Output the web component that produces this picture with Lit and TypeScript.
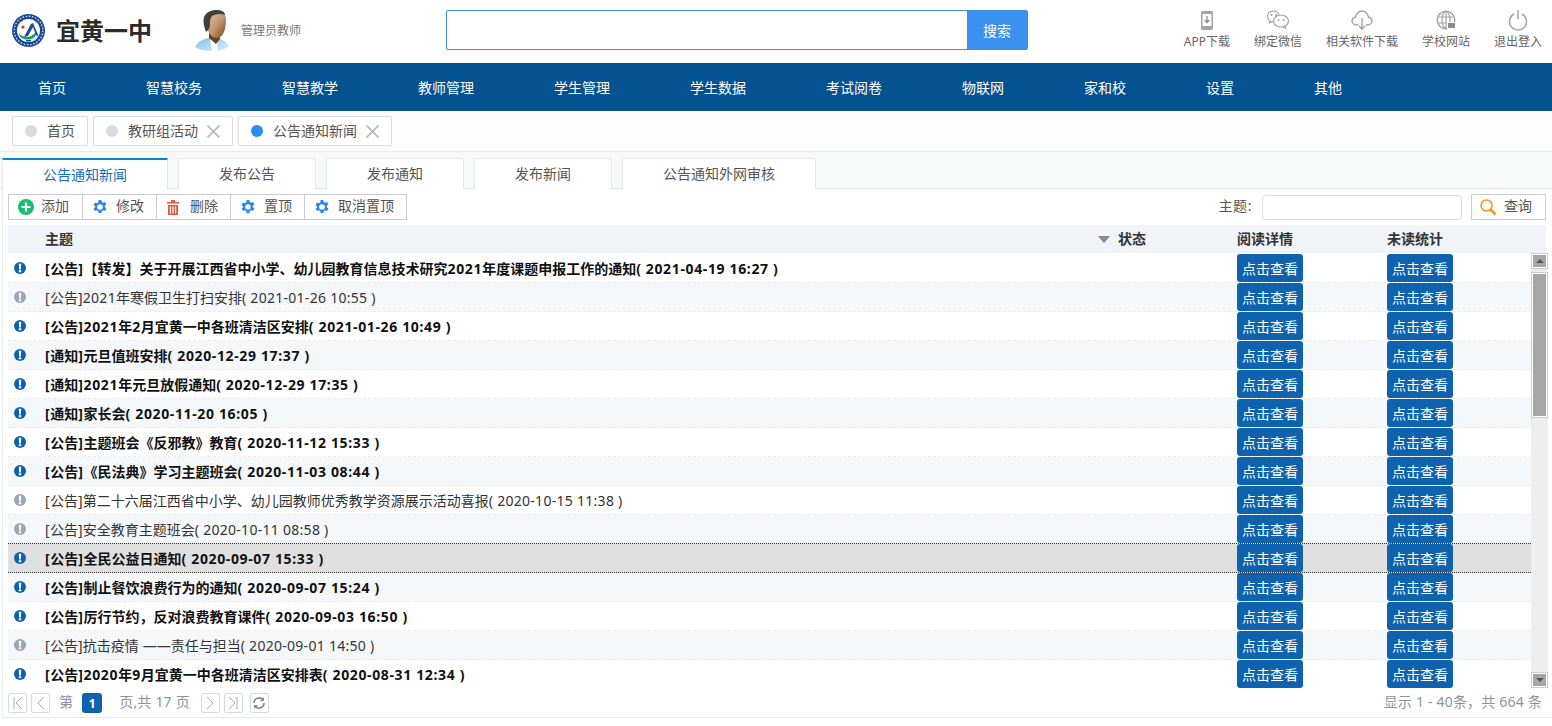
import { LitElement, html, css } from "lit";
import { customElement } from "lit/decorators.js";

const rows: [string, boolean][] = [
  ["[公告]【转发】关于开展江西省中小学、幼儿园教育信息技术研究2021年度课题申报工作的通知( 2021-04-19 16:27 )", true],
  ["[公告]2021年寒假卫生打扫安排( 2021-01-26 10:55 )", false],
  ["[公告]2021年2月宜黄一中各班清洁区安排( 2021-01-26 10:49 )", true],
  ["[通知]元旦值班安排( 2020-12-29 17:37 )", true],
  ["[通知]2021年元旦放假通知( 2020-12-29 17:35 )", true],
  ["[通知]家长会( 2020-11-20 16:05 )", true],
  ["[公告]主题班会《反邪教》教育( 2020-11-12 15:33 )", true],
  ["[公告]《民法典》学习主题班会( 2020-11-03 08:44 )", true],
  ["[公告]第二十六届江西省中小学、幼儿园教师优秀教学资源展示活动喜报( 2020-10-15 11:38 )", false],
  ["[公告]安全教育主题班会( 2020-10-11 08:58 )", false],
  ["[公告]全民公益日通知( 2020-09-07 15:33 )", true],
  ["[公告]制止餐饮浪费行为的通知( 2020-09-07 15:24 )", true],
  ["[公告]厉行节约，反对浪费教育课件( 2020-09-03 16:50 )", true],
  ["[公告]抗击疫情 ——责任与担当( 2020-09-01 14:50 )", false],
  ["[公告]2020年9月宜黄一中各班清洁区安排表( 2020-08-31 12:34 )", true],
];
const nav = ["首页", "智慧校务", "智慧教学", "教师管理", "学生管理", "学生数据", "考试阅卷", "物联网", "家和校", "设置", "其他"];

const gear = html`<svg width="16" height="16" viewBox="0 0 16 16"><path fill="#2b85e4" fill-rule="evenodd" d="M6.6 1h2.8l.4 2 1.2.7 2-.7 1.4 2.4-1.6 1.4v1.4l1.6 1.4L13 12l-2-.7-1.2.7-.4 2H6.6l-.4-2-1.2-.7-2 .7-1.4-2.4 1.6-1.4V7.4L1.6 6 3 3.6l2 .7 1.2-.7zM8 5.2a2.8 2.8 0 100 5.6 2.8 2.8 0 000-5.6z"/></svg>`;
const plus = html`<svg width="16" height="16" viewBox="0 0 16 16"><circle cx="8" cy="8" r="8" fill="#19be6b"/><path d="M8 3.5v9M3.5 8h9" stroke="#fff" stroke-width="2.2"/></svg>`;
const trash = html`<svg width="12" height="15" viewBox="0 0 12 15"><path fill="#e8563f" d="M4 0h4v2h4v1.5H0V2h4zM1 5h10v10H1zm1.8 1.5v7H4v-7zm2.6 0v7h1.2v-7zm2.6 0v7h1.2v-7z"/></svg>`;
const search = html`<svg width="18" height="18" viewBox="0 0 18 18"><circle cx="7.5" cy="7.5" r="5.5" fill="none" stroke="#f7931e" stroke-width="1.5"/><path d="M11.5 11.5l5 5" stroke="#f7931e" stroke-width="2.5"/></svg>`;
const alert = (on: boolean) => html`<svg width="12" height="12" viewBox="0 0 12 12"><circle cx="6" cy="6" r="6" fill="${on ? "#0d62ae" : "#9aa7b4"}"/><path d="M4.8 1.8h2.4l-.3 5.6H5.1zM4.8 8.2h2.4v2H4.8z" fill="#fff"/></svg>`;
const close = html`<svg class="x" viewBox="0 0 13 13"><path d="M.5.5l12 12M12.5.5l-12 12" stroke="#bbb" stroke-width="1.8"/></svg>`;
const title = (t: string) => t.split(/([\x00-\x7f]+)/).map((p, i) => (i % 2 ? html`<span class="lat">${p}</span>` : p));

@customElement("app-root")
export class AppRoot extends LitElement {
  static styles = css`
    :host { display: block; width: 1552px; height: 726px; overflow: hidden; background: #fff; font-family: "Noto Sans", "Noto Sans CJK SC", sans-serif; color: #444; font-size: 14px; }
    svg { display: block; flex: none; }
    .t1 { padding-bottom: 2px; }
    .t2 { padding-bottom: 4px; }
    .top { height: 63px; display: flex; align-items: center; }
    .logo { margin: -2px 0 0 12px; width: 33px; height: 33px; }
    .brand { margin-left: 11px; font-size: 24px; font-weight: 700; color: #2b2b2b; width: 100px; white-space: nowrap; padding-bottom: 4px; }
    .avatar { margin: -3px 0 0 39px; width: 34px; height: 41px; }
    .role { margin-left: 12px; font-size: 12px; color: #777; width: 62px; white-space: nowrap; padding-bottom: 4px; }
    .sbox { margin: -3px 0 0 143px; width: 580px; border: 1px solid #3c8fe8; border-radius: 2px; display: flex; height: 38px; }
    .sfield { flex: 1; }
    .sbtn { width: 60px; background: #3b91ee; color: #fff; display: flex; align-items: center; justify-content: center; font-size: 14px; }
    .tools { margin: -4px 10px 0 auto; display: flex; gap: 24px; }
    .tool { display: flex; flex-direction: column; align-items: center; font-size: 12px; color: #666; gap: 3px; line-height: 16px; }
    .tool svg { height: 22px; }
    .nav { height: 48px; background: #04528f; display: flex; align-items: center; padding-left: 38px; gap: 80px; color: #fff; font-size: 14px; white-space: nowrap; }
    .tabs { height: 40px; display: flex; align-items: center; gap: 5px; padding: 0 0 0 12px; border-bottom: 1px solid #e8eaee; background: #fdfdfd; }
    .tab { height: 28px; border: 1px solid #d7dde4; border-radius: 2px; background: #fff; display: flex; align-items: center; padding: 0 12px; font-size: 14px; color: #555; }
    .dot { width: 12px; height: 12px; border-radius: 50%; background: #d3dce4; margin-right: 10px; }
    .dot.on { background: #2d8cf0; }
    .x { margin-left: 9px; width: 13px; height: 13px; }
    .subs { height: 37px; padding: 6px 0 0 2px; box-sizing: border-box; display: flex; gap: 10px; background: #f7f8f8; border-bottom: 1px solid #dfe3e8; }
    .sub { border: 1px solid #e3e6ea; border-bottom: none; background: #fff; display: flex; align-items: center; justify-content: center; font-size: 14px; color: #555; box-sizing: border-box; height: 31px; }
    .sub.on { width: 166px; border-top: 2px solid #0a84d0; color: #1a6db8; margin-bottom: -1px; height: 32px; }
    .w138 { width: 138px; }
    .w194 { width: 194px; }
    .main { border-left: 1px solid #e6e9ee; margin-left: 2px; border-bottom: 1px solid #e6e9ee; height: 529px; box-sizing: border-box; padding-left: 5px; }
    .bar { height: 36px; display: flex; align-items: center; padding-right: 6px; }
    .btns { display: flex; border: 1px solid #c8cbd2; height: 26px; box-sizing: border-box; }
    .b { display: flex; align-items: center; border-right: 1px solid #c8cbd2; padding-left: 9px; gap: 8px; font-size: 14px; color: #555; box-sizing: border-box; width: 74px; white-space: nowrap; }
    .b.trash { padding-left: 10px; gap: 11px; }
    .b.add { gap: 7px; }
    .b:last-child { border-right: none; width: 101px; }
    .q { margin-left: auto; font-size: 14px; color: #555; letter-spacing: .6px; }
    .inp { width: 198px; height: 23px; border: 1px solid #ddd; border-radius: 4px; margin-left: 10px; }
    .qb { margin-left: 9px; height: 24px; border: 1px solid #ccc; display: flex; align-items: center; gap: 7px; padding-left: 7px; font-size: 14px; color: #555; width: 66px; }
    .head { height: 28px; background: #f0f3f7; display: grid; grid-template-columns: 37px 1025px 48px 119px 150px 1fr; align-items: center; font-size: 14px; font-weight: 700; color: #333; margin-right: 6px; }
    .tri { width: 0; height: 0; border: 6px solid transparent; border-top: 7px solid #7f8a96; border-bottom: none; justify-self: end; margin-right: 8px; }
    .body { position: relative; height: 435px; margin-right: 4px; overflow: hidden; padding-top: 1px; box-sizing: border-box; }
    .row { height: 29px; display: grid; grid-template-columns: 37px 1192px 150px 150px; align-items: center; box-sizing: border-box; border-bottom: 1px dashed #e8ecf0; color: #333; font-size: 14px; white-space: nowrap; margin-right: 17px; }
    .row.alt { background: #f5f8fb; }
    .row.b0 { font-weight: 700; color: #111; }
    .row.sel { background: #e0e0e0; border-top: 1px dotted #333; border-bottom: 1px dotted #333; margin-top: -1px; height: 30px; }
    .row svg { margin-left: 6px; }
    .lat { letter-spacing: .28px; }
    .b0 .lat { letter-spacing: .64px; }
    .see { width: 66px; height: 28px; background: #0f62ae; color: #fff; border-radius: 3px; display: flex; align-items: center; justify-content: center; font-size: 14px; font-weight: 400; }
    .scroll { position: absolute; right: 0; top: 0; width: 17px; height: 435px; background: #eee; }
    .sbar { position: absolute; left: 0; width: 17px; box-sizing: border-box; border: 1px solid #ccc; outline: 1px solid #fff; outline-offset: -2px; background: #a6a6a6; display: flex; align-items: center; justify-content: center; }
    .up { top: 0; height: 16px; }
    .down { bottom: 0; height: 16px; }
    .thumb { top: 19px; height: 146px; }
    .ua { width: 0; height: 0; border: 4px solid transparent; border-bottom: 4px solid #555; border-top: none; }
    .da { width: 0; height: 0; border: 4px solid transparent; border-top: 4px solid #555; border-bottom: none; }
    .pager { height: 28px; display: flex; align-items: center; color: #8a94a6; font-size: 14px; padding-right: 10px; margin-top: 1px; letter-spacing: .2px; }
    .pb { width: 17px; height: 18px; border: 1px solid #d5dae2; border-radius: 2px; margin-right: 4px; display: flex; align-items: center; justify-content: center; }
    .pb.gap { margin-left: 11px; }
    .pb.last { margin-left: 3px; }
    .dn { margin-left: 5px; }
    .num { width: 20px; height: 20px; border-radius: 3px; background: #0f62ae; color: #fff; font-size: 12px; font-weight: 700; display: flex; align-items: center; justify-content: center; margin: 0 17px 0 9px; }
    .total { margin-left: auto; }
  `;

  private logo() {
    return html`<svg class="logo" viewBox="0 0 33 33">
      <circle cx="16.5" cy="16.5" r="16.5" fill="#1b4a9c"/>
      <circle cx="16.5" cy="16.5" r="14.3" fill="none" stroke="#cfe0f5" stroke-width="1.2" stroke-dasharray="1.6 1.6"/>
      <circle cx="16.5" cy="16.5" r="11.5" fill="#fff"/>
      <path d="M6.5 20c2 5 10 8 16 3l3-4-2-1c-3 5-9 6-13 4z" fill="#12a150"/>
      <path d="M12 23l7-13 2-1 6 14-3-2-3-8-5 9z" fill="#1b4a9c"/>
      <circle cx="11" cy="13" r="1.6" fill="#e22"/>
      <rect x="14" y="26" width="5" height="1.5" fill="#1b4a9c"/>
    </svg>`;
  }
  private avatar() {
    return html`<svg class="avatar" viewBox="0 0 34 41">
      <defs>
        <linearGradient id="sk" x1="0" x2="1" y1="0" y2="1"><stop offset="0" stop-color="#e9caa8"/><stop offset=".55" stop-color="#c0946c"/><stop offset="1" stop-color="#6e4828"/></linearGradient>
        <linearGradient id="sh" x1="0" x2="1" y1="0" y2="1"><stop offset="0" stop-color="#7fbdec"/><stop offset="1" stop-color="#dff0fc"/></linearGradient>
      </defs>
      <path d="M0 37c3-6 9-8 13-9h9c4 1 9 3 12 8-4 4-10 5-17 5-7 0-12-1-17-4z" fill="url(#sh)"/>
      <path d="M15 30h8l-1 11h-5z" fill="#fff"/>
      <path d="M14 20h11v9l-4 5-7-6z" fill="#6b4426"/>
      <path d="M11 10c0-6 5-9 10-9 6 0 10 3 10 9 0 9-3 18-9 18-7 0-11-9-11-18z" fill="url(#sk)"/>
      <path d="M11 22C8 14 7 7 12 3c4-3 10-4 15-2 2 1 3 2 3 4-4-2-10-1-13 1-2 2-2 5-2 8 0 3-1 6-4 8z" fill="#3f3f3f"/>
    </svg>`;
  }

  render() {
    const g = "#a3a3a3";
    return html`
      <div class="top">
        ${this.logo()}
        <div class="brand">宜黄一中</div>
        ${this.avatar()}
        <div class="role">管理员教师</div>
        <div class="sbox"><div class="sfield"></div><div class="sbtn">搜索</div></div>
        <div class="tools">
          <div class="tool"><svg width="14" height="22" viewBox="0 0 14 22"><path fill="#a3a3a3" fill-rule="evenodd" d="M2.5 2h9A1.5 1.5 0 0113 3.5v16a1.5 1.5 0 01-1.5 1.5h-9A1.5 1.5 0 011 19.5v-16A1.5 1.5 0 012.5 2zM2.5 5v12h9V5z"/><path d="M7 7v6M4.8 11L7 13.500 9.200 11" fill="none" stroke="#888" stroke-width="1.2"/></svg>APP下载</div>
          <div class="tool"><svg width="24" height="22" viewBox="0 0 24 22"><path d="M13 5.5C12 3 9.5 2 7.5 2 4 2 1.5 4.5 1.5 7.5c0 2 1 3.3 2.5 4.3l-.5 2 2.3-1.2c.7.2 1.4.3 2 .3" fill="none" stroke="${g}" stroke-width="1.2"/><ellipse cx="15" cy="12" rx="7.5" ry="6" fill="none" stroke="${g}" stroke-width="1.2"/><path d="M19 17l1 2.5-3-1.5" fill="none" stroke="${g}"/><circle cx="5.5" cy="6" r="1.1" fill="${g}"/><circle cx="10" cy="6" r="1.1" fill="${g}"/><circle cx="12.5" cy="11" r="1" fill="${g}"/><circle cx="17.5" cy="11" r="1" fill="${g}"/></svg>绑定微信</div>
          <div class="tool"><svg width="22" height="22" viewBox="0 0 22 22"><path d="M7 16H5.5C3 16 1 14.2 1 12c0-2 1.5-3.5 3.5-3.8C5 5 7.7 2 11 2s6 2.8 6.5 6.2c2 .3 3.5 1.8 3.5 3.8 0 2.2-2 4-4.5 4H15" fill="none" stroke="${g}" stroke-width="1.4"/><path d="M11 9v11M8 17l3 3.2 3-3.2" fill="none" stroke="${g}" stroke-width="1.4"/></svg>相关软件下载</div>
          <div class="tool"><svg width="20" height="22" viewBox="0 0 20 22"><circle cx="10" cy="11" r="8.8" fill="none" stroke="${g}" stroke-width="1.4"/><ellipse cx="10" cy="11" rx="4" ry="8.5" fill="none" stroke="${g}" stroke-width="1.2"/><path d="M2 8h16M2 14h16M10 2.5v17" stroke="${g}" stroke-width="1.2"/><rect x="11.5" y="13.5" width="8" height="6" fill="#8c8c8c" stroke="#fff"/></svg>学校网站</div>
          <div class="tool"><svg width="20" height="22" viewBox="0 0 20 22"><path d="M6 5a8.5 8.5 0 108 0" fill="none" stroke="${g}" stroke-width="1.5"/><path d="M10 1v9" stroke="${g}" stroke-width="1.5"/></svg>退出登入</div>
        </div>
      </div>
      <div class="nav">${nav.map((n) => html`<span>${n}</span>`)}</div>
      <div class="tabs">
        <div class="tab"><span class="dot"></span><span class="t1">首页</span></div>
        <div class="tab"><span class="dot"></span><span class="t1">教研组活动</span>${close}</div>
        <div class="tab"><span class="dot on"></span><span class="t1">公告通知新闻</span>${close}</div>
      </div>
      <div class="subs">
        <div class="sub on"><span class="t1">公告通知新闻</span></div>
        <div class="sub w138"><span class="t1">发布公告</span></div>
        <div class="sub w138"><span class="t1">发布通知</span></div>
        <div class="sub w138"><span class="t1">发布新闻</span></div>
        <div class="sub w194"><span class="t1">公告通知外网审核</span></div>
      </div>
      <div class="main">
        <div class="bar">
          <div class="btns">
            <div class="b add">${plus}<span class="t2">添加</span></div>
            <div class="b">${gear}<span class="t2">修改</span></div>
            <div class="b trash">${trash}<span class="t2">删除</span></div>
            <div class="b">${gear}<span class="t2">置顶</span></div>
            <div class="b">${gear}<span class="t2">取消置顶</span></div>
          </div>
          <div class="q t2">主题:</div>
          <div class="inp"></div>
          <div class="qb">${search}<span class="t2">查询</span></div>
        </div>
        <div class="head"><span></span><span class="t1">主题</span><span class="tri"></span><span class="t1">状态</span><span class="t1">阅读详情</span><span class="t1">未读统计</span></div>
        <div class="body">
          ${rows.map(([t, on], i) => html`<div class="row ${i % 2 ? "alt" : ""} ${on ? "b0" : ""} ${i === 10 ? "sel" : ""}">
            ${alert(on)}<span>${title(t)}</span><span class="see">点击查看</span><span class="see">点击查看</span></div>`)}
          <div class="scroll">
            <div class="sbar up"><span class="ua"></span></div>
            <div class="sbar thumb"></div>
            <div class="sbar down"><span class="da"></span></div>
          </div>
        </div>
        <div class="pager">
          <span class="pb"><svg width="12" height="14" viewBox="0 0 12 14"><path d="M2 1v12M10 1L4 7l6 6" fill="none" stroke="#aab"/></svg></span>
          <span class="pb"><svg width="12" height="14" viewBox="0 0 12 14"><path d="M9 1L3 7l6 6" fill="none" stroke="#aab"/></svg></span>
          <span class="dn t2">第</span>
          <span class="num">1</span>
          <span class="t2">页,共 17 页</span>
          <span class="pb gap"><svg width="12" height="14" viewBox="0 0 12 14"><path d="M3 1l6 6-6 6" fill="none" stroke="#aab"/></svg></span>
          <span class="pb"><svg width="12" height="14" viewBox="0 0 12 14"><path d="M10 1v12M2 1l6 6-6 6" fill="none" stroke="#aab"/></svg></span>
          <span class="pb last"><svg width="14" height="14" viewBox="0 0 14 14"><path d="M2 7a5 5 0 019-3M12 7a5 5 0 01-9 3" fill="none" stroke="#888" stroke-width="1.6"/><path d="M12 1v4H8zM2 13V9h4z" fill="#888"/></svg></span>
          <span class="total t2">显示 1 - 40条，共 664 条</span>
        </div>
      </div>
    `;
  }
}
